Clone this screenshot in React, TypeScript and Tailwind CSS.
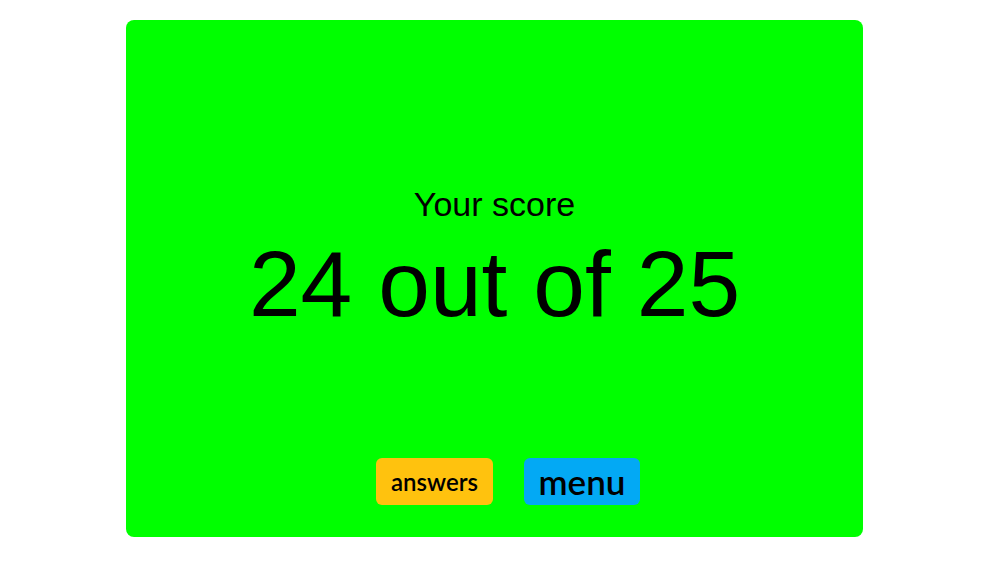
import React from "react";

export default function App() {
  return (
    <div className="w-[1000px] h-[563px] bg-white overflow-hidden">
      <div className="ml-[126px] mt-[20px] w-[737px] h-[517px] bg-[#00ff00] rounded-[8px] flex flex-col items-center">
        <div className="mt-[164px] h-[40px] leading-[40px] text-[34px] text-black font-['Liberation_Sans',Arial,sans-serif]">
          Your score
        </div>
        <div className="mt-[10px] h-[100px] leading-[100px] text-[93px] text-black font-['Liberation_Sans',Arial,sans-serif]">
          24 out of 25
        </div>
        <div className="mt-[124px] flex gap-[31px] pl-[27px] font-['Lato','Noto_Sans',sans-serif]">
          <button className="w-[117px] h-[47px] rounded-[6px] bg-[#ffc20e] text-black text-[24px] font-semibold flex items-center justify-center">
            answers
          </button>
          <button className="w-[116px] h-[47px] rounded-[6px] bg-[#03a9f4] text-black text-[35px] font-semibold flex items-center justify-center">
            menu
          </button>
        </div>
      </div>
    </div>
  );
}
